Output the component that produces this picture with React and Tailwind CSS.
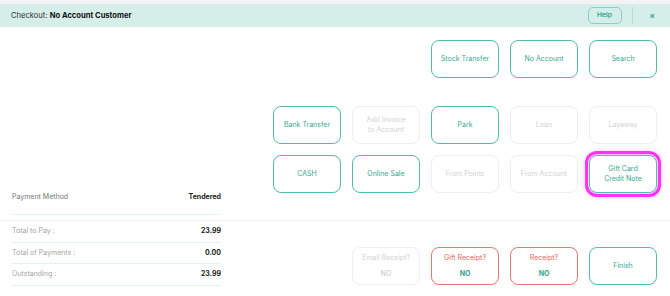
import React from 'react';

const teal = 'border-[#4fbdab] text-[#36a893]';
const red = 'border-[#e8786a] text-[#e0685a]';
const off = 'border-[#eeeeee] text-[#d2d2d2]';

const Btn = ({ children, tone = teal, extra = '' }) => (
  <button
    className={`w-[68px] h-[38px] rounded-lg border-[1.5px] bg-white flex flex-col items-center justify-center text-[7px] leading-[10px] text-center ${tone} ${extra}`}
  >
    {children}
  </button>
);

const Row = ({ label, value }) => (
  <div className="flex items-center justify-between h-[21.7px] border-b border-[#e3f3f0] text-[7px]">
    <span className="text-[#a5a5a5]">{label}</span>
    <span className="font-bold text-[#222]">{value}</span>
  </div>
);

const App = () => {
  return (
    <div className="w-[670px] h-[296px] bg-white overflow-hidden font-['Inter',sans-serif]">
      <div className="h-[4px] bg-[#f3f3f3]" />

      {/* header */}
      <div className="h-[23px] bg-[#d5eeea] flex items-center pl-[11px] pr-[15px]">
        <div className="text-[7.6px] text-[#333]">
          Checkout: <span className="font-bold text-[#111]">No Account Customer</span>
        </div>
        <div className="ml-auto flex items-center h-full">
          <button className="w-[34px] h-[17px] rounded-[5px] border border-[#86d0c4] text-[6.8px] font-semibold text-[#34a18e]">
            Help
          </button>
          <div className="w-px h-[17px] bg-[#b5dcd5] ml-[10px] mr-[17px]" />
          <span className="text-[8px] font-bold text-[#34a18e]">×</span>
        </div>
      </div>

      {/* tender buttons */}
      <div className="flex h-[194px] border-b border-[#f0f0f0]">
        <div className="w-[233px] pl-[12px] pr-[12px] flex flex-col justify-end">
          <div className="flex items-start justify-between pb-[12px] mb-[5px] border-b border-[#e3f3f0] text-[7px] leading-[10px]">
            <span className="text-[#777]">Payment Method</span>
            <span className="font-bold text-[#222]">Tendered</span>
          </div>
        </div>
        <div className="flex-1 flex flex-col items-end pt-[13px] pr-[13px]">
          <div className="flex gap-[11px]">
            <Btn>Stock Transfer</Btn>
            <Btn>No Account</Btn>
            <Btn>Search</Btn>
          </div>
          <div className="grid grid-cols-5 gap-x-[11px] gap-y-[11px] mt-[28px]">
            <Btn>Bank Transfer</Btn>
            <Btn tone={off}>
              <span>Add Invoice</span>
              <span>to Account</span>
            </Btn>
            <Btn>Park</Btn>
            <Btn tone={off}>Loan</Btn>
            <Btn tone={off}>Layaway</Btn>
            <Btn>CASH</Btn>
            <Btn>Online Sale</Btn>
            <Btn tone={off}>From Points</Btn>
            <Btn tone={off}>From Account</Btn>
            <Btn extra="outline outline-[3px] outline-offset-[1px] outline-[#ff33f0] shadow-[0_0_6px_3px_rgba(255,60,240,0.35)]">
              <span>Gift Card</span>
              <span>Credit Note</span>
            </Btn>
          </div>
        </div>
      </div>

      {/* totals + finish */}
      <div className="flex">
        <div className="w-[233px] pl-[12px] pr-[12px]">
          <Row label="Total to Pay :" value="23.99" />
          <Row label="Total of Payments :" value="0.00" />
          <Row label="Outstanding :" value="23.99" />
        </div>
        <div className="flex-1 flex justify-end gap-[11px] pt-[26px] pr-[13px]">
          <Btn tone={off}>
            <span>Email Receipt?</span>
            <span className="mt-[6px] font-semibold">NO</span>
          </Btn>
          <Btn tone={red}>
            <span>Gift Receipt?</span>
            <span className="mt-[6px] font-bold text-[#2fa48f]">NO</span>
          </Btn>
          <Btn tone={red}>
            <span>Receipt?</span>
            <span className="mt-[6px] font-bold text-[#2fa48f]">NO</span>
          </Btn>
          <Btn>Finish</Btn>
        </div>
      </div>
    </div>
  );
};

export default App;
